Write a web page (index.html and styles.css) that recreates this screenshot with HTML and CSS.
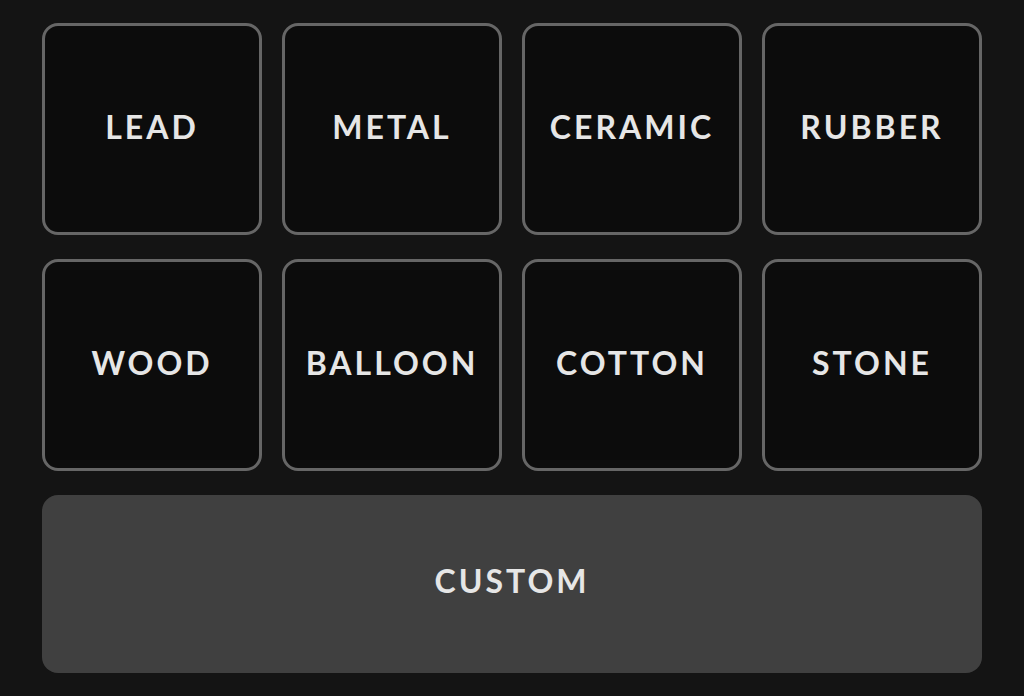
FILE: index.html
```html
<!DOCTYPE html>
<html>
<head>
<meta charset="utf-8">
<link rel="stylesheet" href="styles.css">
</head>
<body>
<div class="panel">
  <div class="grid">
    <button class="tile">LEAD</button>
    <button class="tile">METAL</button>
    <button class="tile">CERAMIC</button>
    <button class="tile">RUBBER</button>
    <button class="tile">WOOD</button>
    <button class="tile">BALLOON</button>
    <button class="tile">COTTON</button>
    <button class="tile">STONE</button>
  </div>
  <button class="custom">CUSTOM</button>
</div>
</body>
</html>
```
FILE: styles.css
```css
html, body {
  margin: 0;
  padding: 0;
  background: #141414;
  width: 1024px;
  height: 696px;
  overflow: hidden;
}
.panel {
  padding: 23px 42px 0 42px;
  display: flex;
  flex-direction: column;
  gap: 24px;
}
.grid {
  display: grid;
  grid-template-columns: repeat(4, 220px);
  grid-auto-rows: 212px;
  column-gap: 20px;
  row-gap: 24px;
}
.tile, .custom {
  font-family: "Lato", "Noto Sans", sans-serif;
  font-weight: 700;
  font-size: 32px;
  letter-spacing: 3px;
  color: #e6e6e6;
  margin: 0;
  padding: 0 0 6px 0;
  cursor: pointer;
}
.tile {
  background: #0c0c0c;
  border: 3px solid #666666;
  border-radius: 16px;
}
.custom {
  height: 178px;
  width: 940px;
  background: #404040;
  border: none;
  border-radius: 16px;
  padding-bottom: 8px;
}
```
